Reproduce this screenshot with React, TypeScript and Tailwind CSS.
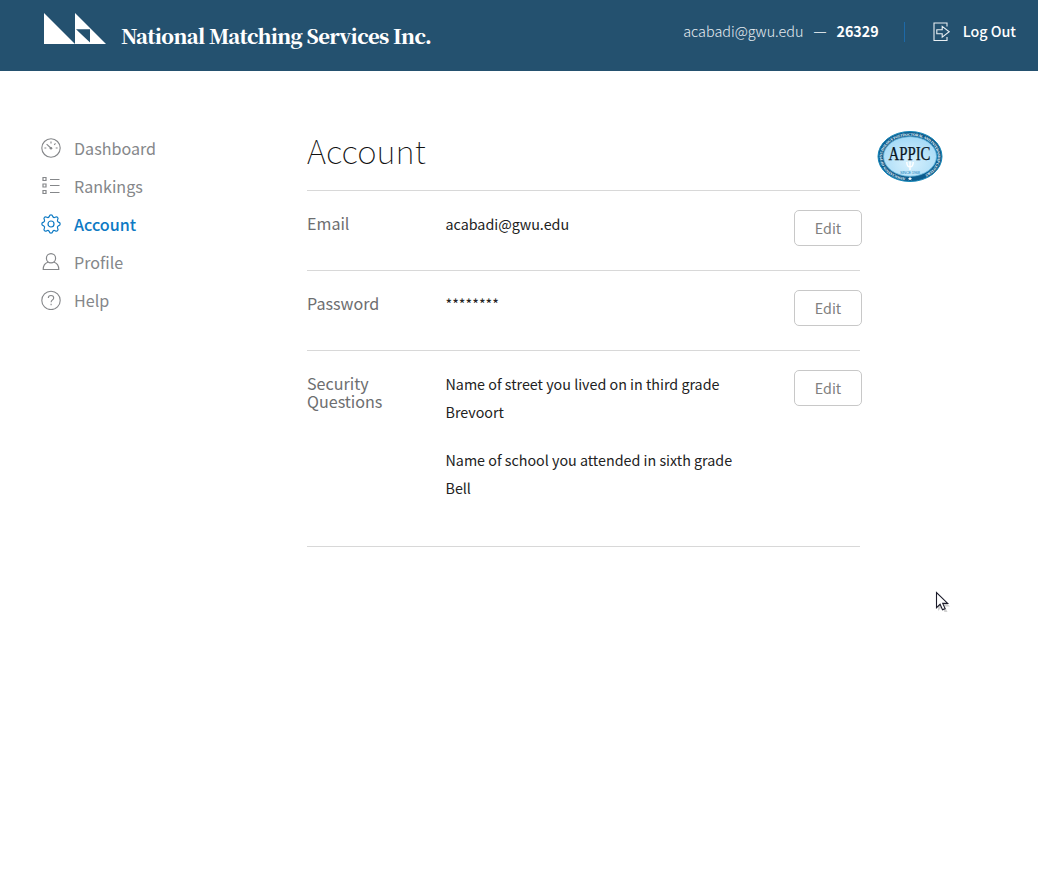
import React from "react";

const SANS = "font-['Noto_Sans_CJK_SC','Noto_Sans',sans-serif]";

function GaugeIcon() {
  return (
    <svg width="20" height="20" viewBox="0 0 20 20" fill="none" stroke="currentColor" strokeWidth="1.1">
      <circle cx="10" cy="10" r="9.2" />
      <circle cx="10" cy="10.3" r="1.3" fill="currentColor" stroke="none" />
      <path d="M9.8 10 5.6 6.2M10 3.6v1.8M3.4 10h1.9M14.7 10h1.9M13.2 6.8l1.3-1.4" />
    </svg>
  );
}

function ListIcon() {
  return (
    <svg width="20" height="20" viewBox="0 0 20 20" fill="none" stroke="currentColor" strokeWidth="1.2">
      <path d="M2 1.500h3v3h-3zM2 8h3v3h-3zM2 14.500h3v3h-3zM9 3.500h9.500M9 9.500h9.500M9 16.500h9.500" />
    </svg>
  );
}

function GearIcon() {
  return (
    <svg width="20" height="20" viewBox="0 0 20 20" fill="none" stroke="currentColor" strokeWidth="1.2" strokeLinejoin="round">
      <circle cx="10" cy="10" r="3" />
      <path d="M8.2 2.6C8.5 1.2 9 .8 10 .8s1.500.4 1.800 1.800c.6 1 1.400 1.200 2.300.7 1.200-.7 1.900-.6 2.500 0s.7 1.300 0 2.500c-.5.9-.3 1.700.8 2.400C18.800 8.500 19.200 9 19.200 10s-.4 1.500-1.800 1.800c-1.100.7-1.300 1.500-.8 2.400.7 1.200.6 1.900 0 2.500s-1.300.7-2.500 0c-.9-.5-1.700-.3-2.300.7-.3 1.400-.8 1.800-1.800 1.800s-1.500-.4-1.800-1.800c-.6-1-1.400-1.200-2.300-.7-1.200.7-1.900.6-2.500 0s-.7-1.300 0-2.500c.5-.9.300-1.700-.8-2.400C1.200 11.500.8 11 .8 10s.4-1.500 1.800-1.800c1.100-.7 1.300-1.500.8-2.400-.7-1.200-.6-1.900 0-2.500s1.300-.7 2.500 0c.9.500 1.700.3 2.300-.7Z" />
    </svg>
  );
}

function PersonIcon() {
  return (
    <svg width="20" height="20" viewBox="0 0 20 20" fill="none" stroke="currentColor" strokeWidth="1.2" strokeLinejoin="round">
      <circle cx="10" cy="6.200" r="4.600" />
      <path d="M7.300 10C4 11 2.200 13 2.200 17.500h15.600C17.800 13 16 11 12.700 10" />
    </svg>
  );
}

function HelpIcon() {
  return (
    <svg width="20" height="20" viewBox="0 0 20 20" fill="none" stroke="currentColor" strokeWidth="1.1">
      <circle cx="10" cy="10.400" r="9.2" />
      <path d="M7.300 8.100c0-1.700 1.100-2.600 2.700-2.600s2.700.9 2.700 2.400c0 2-2.600 2-2.600 4.300M10.100 13.700v1.500" />
    </svg>
  );
}

function LogOutIcon() {
  return (
    <svg width="18" height="20" viewBox="0 0 18 20" fill="none" stroke="currentColor" strokeWidth="1.1" className="text-[#e9eff3]">
      <path d="M14 4.500V1H1v17.500h13V15" />
      <path d="M3.800 7.700h5.400V4.300l7 5.500-7 5.400v-3.400H3.800z" />
    </svg>
  );
}

function BrandMark() {
  return (
    <svg width="62" height="31" viewBox="0 0 62 31">
      <path d="M0 0v31h31zM31 0v31h31z" fill="#fff" />
      <path d="M32 16.300h14v13.300z" fill="#24516f" />
    </svg>
  );
}

function AppicSeal() {
  return (
    <svg width="66" height="52" viewBox="0 0 66 52">
      <defs>
        <radialGradient id="seal" cx="50%" cy="65%" r="65%">
          <stop offset="0" stopColor="#d8f1fd" />
          <stop offset="1" stopColor="#a3d9f6" />
        </radialGradient>
        <path id="ring" d="M28.500 46.800A27.800 21.200 0 1 1 38 46.700" />
      </defs>
      <ellipse cx="33" cy="25.500" rx="32" ry="25" fill="#0d5d8e" stroke="#1687b8" />
      <ellipse cx="33" cy="25.500" rx="26.500" ry="19.800" fill="url(#seal)" stroke="#65b6dc" strokeWidth=".8" />
      <text className="font-['Liberation_Serif',serif] font-bold" fontSize="3.700" letterSpacing="-.12" fill="#fff">
        <textPath href="#ring">ASSOCIATION OF PSYCHOLOGY POSTDOCTORAL AND INTERNSHIP CENTERS</textPath>
      </text>
      <path d="m33 45.500.7 1.500h1.500l-1.200 1 .5 1.500-1.500-.9-1.500.9.5-1.500-1.200-1h1.500z" fill="#fff" />
      <text x="32.500" y="28.500" textAnchor="middle" textLength="42" lengthAdjust="spacingAndGlyphs" className="font-['Liberation_Serif',serif]" fontSize="18.500" fill="#08151f" stroke="#08151f" strokeWidth=".25">APPIC</text>
      <path d="M29.800 31c0 3.500.8 5 3.200 5s3.200-1.500 3.200-5M33 30.500v8.500" fill="none" stroke="#fff" strokeWidth="1.400" />
      <text x="33" y="43" textAnchor="middle" textLength="20" className="font-['Liberation_Sans',sans-serif]" fontSize="4" fill="#1f86be">SINCE 1968</text>
    </svg>
  );
}

const NAV = [
  { label: "Dashboard", icon: <GaugeIcon /> },
  { label: "Rankings", icon: <ListIcon /> },
  { label: "Account", icon: <GearIcon />, active: true },
  { label: "Profile", icon: <PersonIcon /> },
  { label: "Help", icon: <HelpIcon /> },
];

function Row({ label, className, children }: { label: string; className: string; children: React.ReactNode }) {
  return (
    <div className={`flex border-b border-[#d8d8d8] pt-[19px] ${className}`}>
      <div className="mt-1 w-[138.5px] shrink-0 pr-10 text-[16.1px] leading-[18px] text-[#6d6e70]">{label}</div>
      <div className="grow text-[14.3px] leading-7 whitespace-nowrap text-[#222]">{children}</div>
      <button className="-mr-[2px] h-9 w-[68px] shrink-0 rounded-[5px] border border-[#c8c8c8] text-[14.3px] leading-[34px] text-[#808080]">
        Edit
      </button>
    </div>
  );
}

export default function App() {
  return (
    <div className={`min-h-[875px] w-[1038px] bg-white ${SANS}`}>
      <header className="flex h-[71px] bg-[#24516f] text-white">
        <div className="flex pt-[13px] pl-11">
          <BrandMark />
          <div className="mt-[9px] ml-[15px] font-['Noto_Serif_CJK_SC','Liberation_Serif',serif] text-[20px] leading-7 font-black tracking-[-0.63px] whitespace-nowrap">
            National Matching Services Inc.
          </div>
        </div>
        <div className="mr-[22px] ml-auto flex h-[63px] items-center text-[14.3px] whitespace-nowrap">
          <span className="-mt-[2px] text-[14.400px] font-light text-[#e4ebef]">acabadi@gwu.edu</span>
          <span className="mx-[10.500px] mt-[1px] font-['Liberation_Sans',sans-serif] text-[12px] leading-4 text-[#d5dfe5]">—</span>
          <span className="-mt-[2px] font-bold">26329</span>
          <span className="mr-7 ml-[25px] h-5 w-px bg-[#1d69a8]" />
          <LogOutIcon />
          <span className="-mt-[2px] ml-3 font-medium">Log Out</span>
        </div>
      </header>
      <div className="flex">
        <nav className="w-[307px] shrink-0 pt-[59px] pl-[41px]">
          {NAV.map((n) => (
            <a key={n.label} className={`flex h-[38px] items-start ${n.active ? "font-medium text-[#0e7ac4]" : "text-[#85878a]"}`}>
              <span className="mt-[7.700px] w-[33px]">{n.icon}</span>
              <span className="mt-1 text-[16.100px] leading-7">{n.label}</span>
            </a>
          ))}
        </nav>
        <main className="w-[553px] shrink-0">
          <h1 className="h-[120px] border-b border-[#d8d8d8] pt-[55px] text-[33px] leading-[48px] font-thin text-[#111]">Account</h1>
          <Row label="Email" className="h-20">acabadi@gwu.edu</Row>
          <Row label="Password" className="h-20">********</Row>
          <Row label="Security Questions" className="h-[196px]">
            <p>Name of street you lived on in third grade</p>
            <p>Brevoort</p>
            <p className="mt-5">Name of school you attended in sixth grade</p>
            <p>Bell</p>
          </Row>
        </main>
        <div className="pt-[60px] pl-[17px]">
          <AppicSeal />
        </div>
      </div>
      <svg className="absolute top-[591px] left-[935px]" width="18" height="22" viewBox="0 0 18 22">
        <path d="M3 3v17l4-4 2.500 5h3l-2.500-5.500h5z" fill="#000" opacity=".18" />
        <path d="M1.500 1.500v15.200l3.600-3.400 2.400 5.400 2.600-1.100-2.400-5.200h5z" fill="#fff" stroke="#1b1b2a" strokeWidth="1.100" />
      </svg>
    </div>
  );
}
